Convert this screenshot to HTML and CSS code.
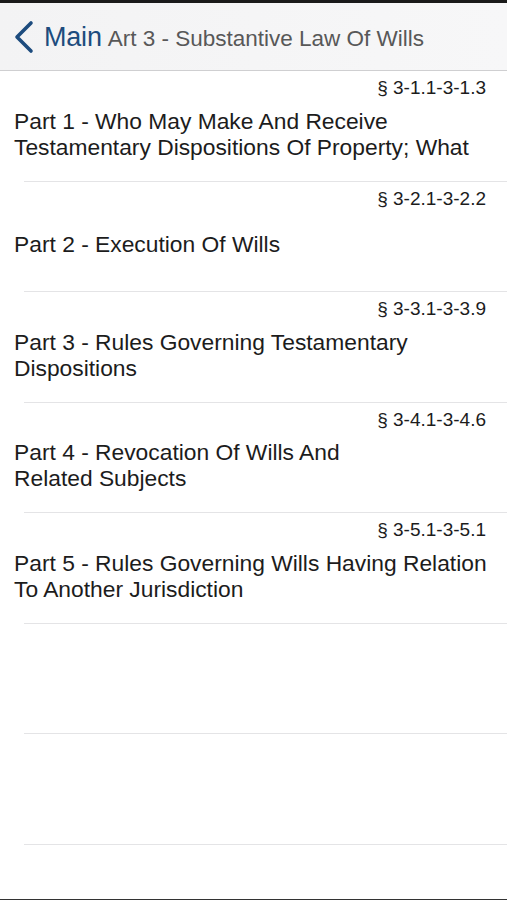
FILE: index.html
```html
<!DOCTYPE html>
<html lang="en">
<head>
  <meta charset="UTF-8" />
  <meta name="viewport" content="width=device-width, initial-scale=1.0"/>
  <title>Art 3 - Substantive Law Of Wills</title>
  <link rel="stylesheet" href="styles.css">
</head>
<body>
  <div class="topbar"></div>
  <header class="nav">
    <a class="back" href="#">
      <svg class="chevron" width="22" height="34" viewBox="0 0 22 34">
        <path d="M18 3 L4 17 L18 31" fill="none" stroke="#1d4c7e" stroke-width="3.6" stroke-linecap="round" stroke-linejoin="round"/>
      </svg>
      <span class="back-label">Main</span>
    </a>
    <span class="nav-title">Art 3 - Substantive Law Of Wills</span>
  </header>

  <ul class="parts">
    <li class="part">
      <div class="range">§ 3-1.1-3-1.3</div>
      <div class="part-body"><div class="part-title">Part 1 - Who May Make And Receive Testamentary Dispositions Of Property; What</div></div>
    </li>
    <li class="part">
      <div class="range">§ 3-2.1-3-2.2</div>
      <div class="part-body"><div class="part-title">Part 2 - Execution Of Wills</div></div>
    </li>
    <li class="part">
      <div class="range">§ 3-3.1-3-3.9</div>
      <div class="part-body"><div class="part-title">Part 3 - Rules Governing Testamentary Dispositions</div></div>
    </li>
    <li class="part">
      <div class="range">§ 3-4.1-3-4.6</div>
      <div class="part-body"><div class="part-title">Part 4 - Revocation Of Wills And<br>Related Subjects</div></div>
    </li>
    <li class="part">
      <div class="range">§ 3-5.1-3-5.1</div>
      <div class="part-body"><div class="part-title">Part 5 - Rules Governing Wills Having Relation To Another Jurisdiction</div></div>
    </li>
    <li class="part empty"></li>
    <li class="part empty"></li>
  </ul>
  <div class="bottombar"></div>
</body>
</html>
```

FILE: styles.css
```css
body {
  margin: 0;
  font-family: 'Liberation Sans', Arial, sans-serif;
  background: #fff;
  color: #1c1c1c;
  height: 900px;
  overflow: hidden;
  position: relative;
}
.topbar {
  height: 3px;
  background: #1a1a1a;
}
.nav {
  height: 67px;
  display: flex;
  align-items: center;
  padding-left: 13px;
  background: linear-gradient(90deg, #f3f3f4, #f7f7f8);
  border-bottom: 1px solid #cfcfd1;
}
.back {
  display: flex;
  align-items: center;
  text-decoration: none;
  color: #1d4c7e;
  margin-top: 1px;
}
.chevron {
  display: block;
  margin-right: 9px;
}
.back-label {
  font-size: 27px;
  letter-spacing: -0.2px;
}
.nav-title {
  margin-left: 6px;
  margin-top: 4px;
  font-size: 22.5px;
  color: #585858;
}
.parts {
  list-style: none;
  margin: 0;
  padding: 0;
}
.part {
  height: 110.5px;
  box-sizing: border-box;
  display: flex;
  flex-direction: column;
  position: relative;
}
.part::after {
  content: "";
  position: absolute;
  left: 24px;
  right: 0;
  bottom: 0;
  height: 1px;
  background: #e4e4e6;
}
.range {
  margin-top: 7px;
  padding-right: 21px;
  text-align: right;
  font-size: 19px;
  line-height: 20px;
}
.part-body {
  flex: 1;
  display: flex;
  align-items: center;
  padding: 0 12px 12px 14px;
}
.part-title {
  font-size: 22.8px;
  line-height: 26px;
}
.bottombar {
  position: absolute;
  left: 0;
  right: 0;
  bottom: 0;
  height: 1px;
  background: #333;
}
```
